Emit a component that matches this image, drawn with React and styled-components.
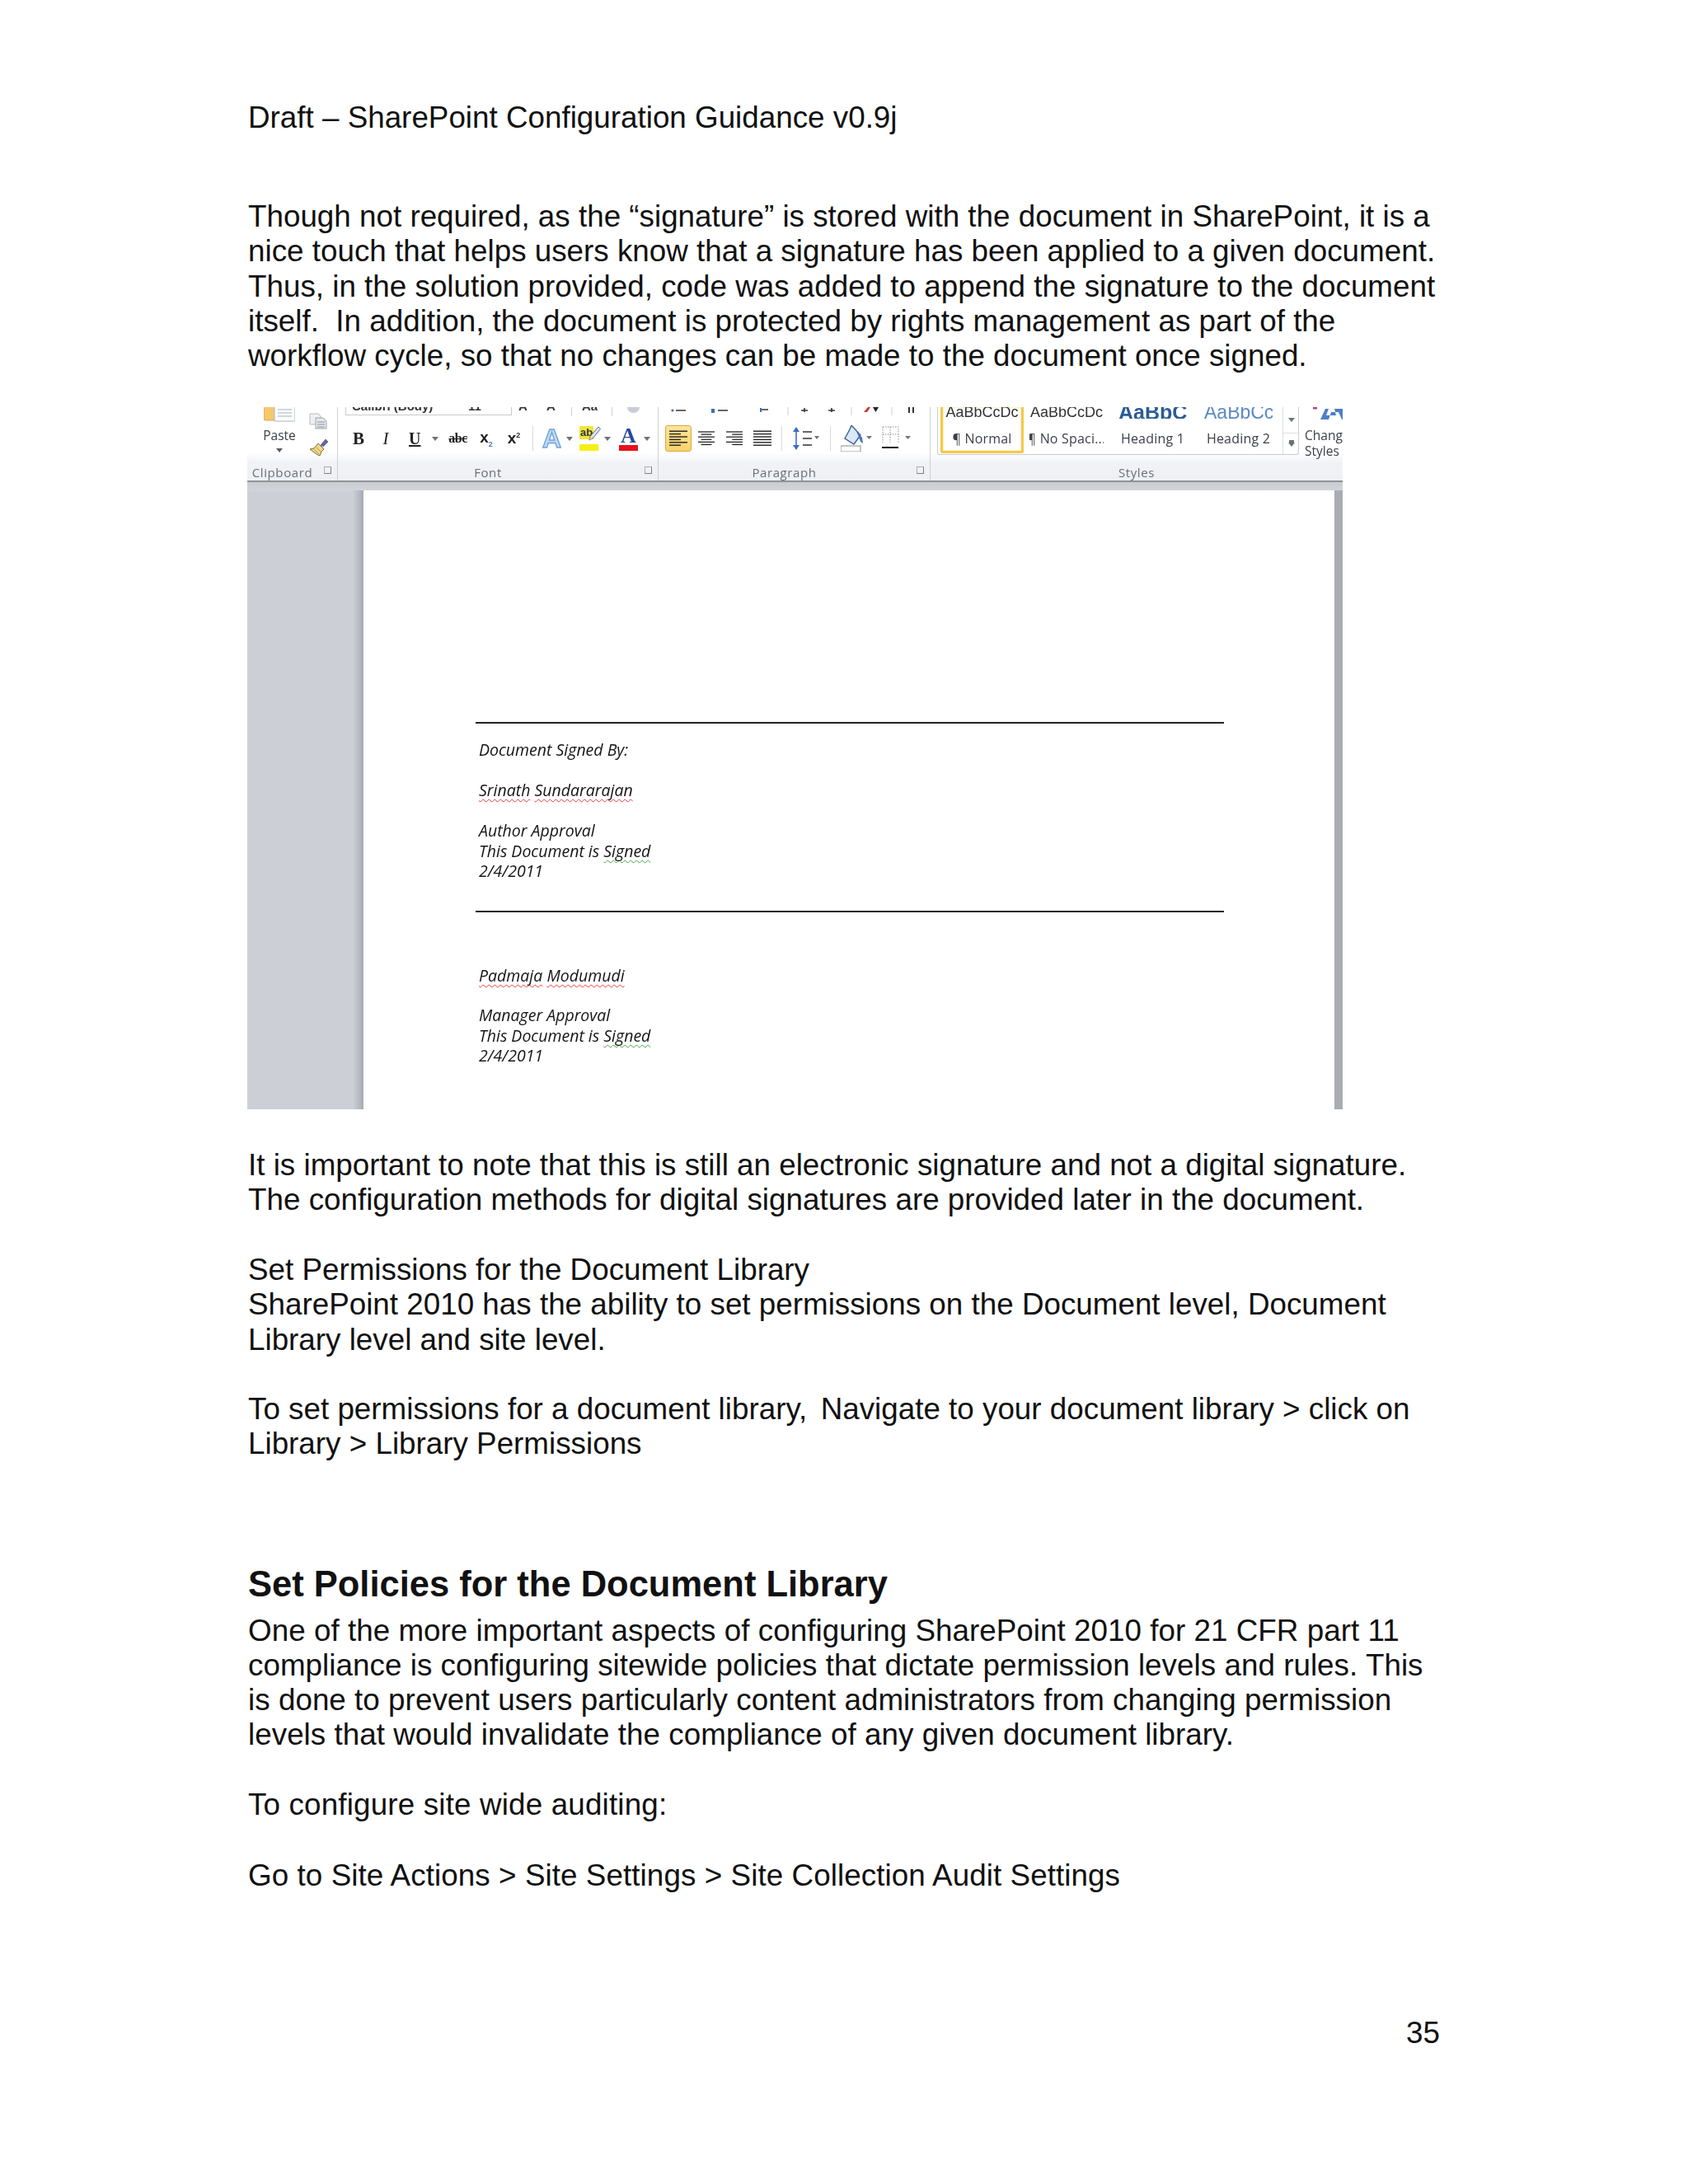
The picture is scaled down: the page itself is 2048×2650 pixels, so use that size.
import styled, { createGlobalStyle } from "styled-components"

const Global = createGlobalStyle`
  body {
    margin: 0;
    background: #fff;
    color: #111;
    font-family: "Liberation Sans", Arial, sans-serif;
  }
`

export default function App() {
  return (
    <Sheet>
      <Global />
      <Header>Draft – SharePoint Configuration Guidance v0.9j</Header>
      <Para $top={78}>
        Though not required, as the “signature” is stored with the document in SharePoint, it is a{"\n"}
        nice touch that helps users know that a signature has been applied to a given document.{"\n"}
        Thus, in the solution provided, code was added to append the signature to the document{"\n"}
        itself.  In addition, the document is protected by rights management as part of the{"\n"}
        workflow cycle, so that no changes can be made to the document once signed.
      </Para>

      <Shot>
        <Ribbon />
        <Workspace>
          <Sidebar />
          <SidebarShade />
          <DocPage>
            <SignBlock />
          </DocPage>
          <PageEdge />
        </Workspace>
      </Shot>

      <Para $top={47}>
        It is important to note that this is still an electronic signature and not a digital signature.{"\n"}
        The configuration methods for digital signatures are provided later in the document.
      </Para>
      <Para $top={42.5}>
        Set Permissions for the Document Library{"\n"}
        SharePoint 2010 has the ability to set permissions on the Document level, Document{"\n"}
        Library level and site level.
      </Para>
      <Para $top={42.5}>
        To set permissions for a document library,{" \u2006"}Navigate to your document library &gt; click on{"\n"}
        Library &gt; Library Permissions
      </Para>
      <Heading>Set Policies for the Document Library</Heading>
      <Para $ls={0.03}>
        One of the more important aspects of configuring SharePoint 2010 for 21 CFR part 11{"\n"}
        compliance is configuring sitewide policies that dictate permission levels and rules. This{"\n"}
        is done to prevent users particularly content administrators from changing permission{"\n"}
        levels that would invalidate the compliance of any given document library.
      </Para>
      <Para $top={43} $ls={0.16}>To configure site wide auditing:</Para>
      <Para $top={43} $ls={0.07}>Go to Site Actions &gt; Site Settings &gt; Site Collection Audit Settings</Para>
      <PageNumber>35</PageNumber>
    </Sheet>
  )
}

function Ribbon() {
  return (
    <RibbonBar>
      <Group $w={110} label="Clipboard" launcher>
        <ClipboardBody>
          <PasteCol>
            <PasteIcon />
            <SmallLabel>Paste</SmallLabel>
            <Caret $dark />
          </PasteCol>
          <SmallCol>
            <CopyIcon />
            <PainterIcon />
          </SmallCol>
        </ClipboardBody>
      </Group>

      <Group $w={389} label="Font" launcher>
        <ClipRow>
          <FontInput>
            <CutText $w={141}>Calibri (Body)</CutText>
            <CutText $w={60}>11</CutText>
          </FontInput>
          <CutText $ml={8} $w={34}>A</CutText>
          <CutText $w={30}>A</CutText>
          <ClipSep />
          <CutText $ml={12} $w={36}>Aa</CutText>
          <ClipSep />
          <EraserStub />
        </ClipRow>
        <ToolRow $pad={18}>
          <GlyphB $w={14}>B</GlyphB>
          <GlyphI $w={10} $ml={21}>I</GlyphI>
          <GlyphU $w={13} $ml={23}>U</GlyphU>
          <Caret $ml={15} />
          <GlyphStrike $w={23} $ml={12}>abc</GlyphStrike>
          <GlyphX $w={18} $ml={14}>x<sub>2</sub></GlyphX>
          <GlyphX $w={19} $ml={15}>x<sup>2</sup></GlyphX>
          <ToolSep $ml={13} />
          <GlowA $ml={11}>A</GlowA>
          <Caret $ml={6} />
          <Marker $ml={8}>
            <MarkerText>ab</MarkerText>
            <PencilIcon />
          </Marker>
          <Caret $ml={7} />
          <ColorA $ml={10}>A</ColorA>
          <Caret $ml={7} />
        </ToolRow>
      </Group>

      <Group $w={330} label="Paragraph" launcher>
        <ParagraphTop />
        <ToolRow $pad={8}>
          <AlignButton><AlignIcon kind="left" /></AlignButton>
          <AlignSlot $ml={8}><AlignIcon kind="center" /></AlignSlot>
          <AlignSlot $ml={14}><AlignIcon kind="right" /></AlignSlot>
          <AlignSlot $ml={12} $w={23}><AlignIcon kind="justify" /></AlignSlot>
          <ToolSep $ml={12} />
          <LineSpacingIcon />
          <ToolSep $ml={12} />
          <ShadingIcon />
          <BordersIcon />
        </ToolRow>
      </Group>

      <Group $w={500} label="Styles">
        <StylesBody>
          <Gallery>
            <StyleItem $w={101} $ml={3} $active>
              <Sample>AaBbCcDc</Sample>
              <StyleName>¶ Normal</StyleName>
            </StyleItem>
            <StyleItem $w={90} $ml={7}>
              <Sample>AaBbCcDc</Sample>
              <StyleName>¶ No Spaci...</StyleName>
            </StyleItem>
            <StyleItem $w={83} $ml={18}>
              <Sample $bold $color="#2b5c95" $size={25}>AaBbCc</Sample>
              <StyleName>Heading 1</StyleName>
            </StyleItem>
            <StyleItem $w={83} $ml={21}>
              <Sample $color="#5a8ac4" $size={23}>AaBbCc</Sample>
              <StyleName>Heading 2</StyleName>
            </StyleItem>
            <GalleryScroll>
              <ScrollBtn $h={31}><Caret /></ScrollBtn>
              <ScrollBtn $h={27}><MoreCaret /></ScrollBtn>
            </GalleryScroll>
          </Gallery>
          <ChangeCol>
            <ChangeIcon />
            <ChangeLabel>Chang{"\n"}Styles</ChangeLabel>
          </ChangeCol>
        </StylesBody>
      </Group>
    </RibbonBar>
  )
}

function Group({ $w, label, launcher, children }) {
  return (
    <GroupBox $w={$w}>
      <GroupBody>{children}</GroupBody>
      <GroupLabel $launcher={launcher}>
        <span>{label}</span>
        {launcher && <Launcher />}
      </GroupLabel>
    </GroupBox>
  )
}

function SignBlock() {
  return (
    <>
      <Rule />
      <SignLines $top={20}>
        <SignLine>Document Signed By:</SignLine>
        <SignLine $gap>
          <Spell>Srinath</Spell> <Spell>Sundararajan</Spell>
        </SignLine>
        <SignLine $gap>Author Approval</SignLine>
        <SignLine>This Document is <Spell $green>Signed</Spell></SignLine>
        <SignLine>2/4/2011</SignLine>
      </SignLines>
      <Rule $top={35} />
      <SignLines $top={65}>
        <SignLine>
          <Spell>Padmaja</Spell> <Spell>Modumudi</Spell>
        </SignLine>
        <SignLine $gap>Manager Approval</SignLine>
        <SignLine>This Document is <Spell $green>Signed</Spell></SignLine>
        <SignLine>2/4/2011</SignLine>
      </SignLines>
    </>
  )
}

// ribbon drawings
function PasteIcon() {
  return (
    <svg width="38" height="18" viewBox="0 0 38 18">
      <rect x="0" y="-8" width="20" height="24" rx="2" fill="#f6c86e" stroke="#d9a648" />
      <rect x="13" y="-6" width="25" height="23" fill="#fbfcfe" stroke="#aeb6c2" />
      <path d="M17 3h17M17 7h17M17 11h17" stroke="#c3cad4" strokeWidth="1.5" />
    </svg>
  )
}

function CopyIcon() {
  return (
    <svg width="22" height="20" viewBox="0 0 22 20">
      <path d="M1 1h10l3 3v10H1z" fill="#eef0f3" stroke="#b7bcc3" />
      <path d="M8 6h9l4 4v9H8z" fill="#e4e7eb" stroke="#9ea4ad" />
      <path d="M10 11h9M10 14h9M10 17h9" stroke="#8d939c" />
    </svg>
  )
}

function PainterIcon() {
  return (
    <svg width="24" height="22" viewBox="0 0 24 22">
      <path d="M14 8l6-7 3 3-6 6z" fill="#6a63a8" stroke="#4b4680" strokeWidth=".6" />
      <path d="M11 6l7 7-3 3-2 5-4-2-8-6 5-1z" fill="#f0d98a" stroke="#7a6a32" />
      <path d="M6 13l6 6M9 11l5 5" stroke="#b49a45" />
    </svg>
  )
}

function PencilIcon() {
  return (
    <Pencil width="15" height="20" viewBox="0 0 15 20">
      <path d="M12 1l2.5 2.5L5 15l-4 2 1-4.5z" fill="#dfe6f2" stroke="#56657e" />
      <path d="M1 17l1-4.5L5 15z" fill="#f1c24e" />
    </Pencil>
  )
}

function AlignIcon({ kind }) {
  const rows = [0, 1, 2, 3, 4, 5]
  return (
    <svg width="22" height="20" viewBox="0 0 22 20">
      {rows.map((i) => {
        const short = i % 2 === 1 && kind !== "justify"
        const w = short ? 14 : 22
        const x = kind === "center" ? (22 - w) / 2 : kind === "right" ? 22 - w : 0
        return <rect key={i} x={x} y={i * 3.4 + .5} width={w} height="1.4" fill="#222" />
      })}
    </svg>
  )
}

function LineSpacingIcon() {
  return (
    <LineSpacingBox>
      <svg width="34" height="28" viewBox="0 0 34 28">
        <path d="M5 0l4 6H1zM5 28l4-6H1z" fill="#3b6fc0" />
        <path d="M5 5v18" stroke="#3b6fc0" strokeWidth="1.6" />
        <path d="M13 6h11M13 14h11M13 22h11" stroke="#333" strokeWidth="1.6" />
        <path d="M27 11h6l-3 4z" fill="#6d7278" />
      </svg>
    </LineSpacingBox>
  )
}

function ShadingIcon() {
  return (
    <ShadingBox>
      <svg width="38" height="32" viewBox="0 0 38 32">
        <path d="M13 0l11 12-8 11-11-7 6-11z" fill="#dbe7f6" stroke="#3b5f94" strokeWidth="1.4" />
        <path d="M19 7l7 8 1 7-3-2z" fill="#4a77bd" />
        <rect x="0" y="25" width="24" height="7" fill="#fff" stroke="#8c8c8c" />
        <path d="M31 13h7l-3.5 4z" fill="#73787e" />
      </svg>
    </ShadingBox>
  )
}

function BordersIcon() {
  return (
    <BordersBox>
      <svg width="35" height="30" viewBox="0 0 35 30">
        <path d="M1 1h19v19M1 1v19M10 1v19M1 10h19" fill="none" stroke="#8a8f96" strokeWidth="1" strokeDasharray="1.5 1.5" />
        <path d="M0 26h20" stroke="#111" strokeWidth="2" />
        <path d="M28 12h7l-3.5 4z" fill="#73787e" />
      </svg>
    </BordersBox>
  )
}

function ParagraphTop() {
  return (
    <TopStrip width="330" height="11" viewBox="0 0 330 11">
      <circle cx="17" cy="4" r="1.6" fill="#3b6fc0" />
      <path d="M21 4h12M72 4h12M125 3h8M173 4h8M177 1v5M206 4h8M210 1v5" stroke="#333" strokeWidth="1.6" />
      <rect x="64" y="2" width="4" height="5" fill="#3b6fc0" />
      <rect x="123" y="1" width="2" height="5" fill="#3b6fc0" />
      <path d="M157 0v10M234 0v10M283 0v10" stroke="#ccd0d6" />
      <path d="M249 6l5-6h3l-4 6z" fill="#c0392b" />
      <path d="M260 0h7l-3.5 6z" fill="#222" />
      <path d="M304 0v7M309 0v7" stroke="#333" strokeWidth="2" />
    </TopStrip>
  )
}

function ChangeIcon() {
  return (
    <ChangeBox>
      <svg width="44" height="16" viewBox="0 0 44 16">
        <rect x="1" y="0" width="5" height="2.5" fill="#b0488a" />
        <path d="M10 15l6-13h4l-3 8h12l-2-8h15v13h-6l-4-9h-9l-3 9z" fill="#4c80c9" />
      </svg>
    </ChangeBox>
  )
}

// page
const Sheet = styled.div`
  box-sizing: border-box;
  width: 2048px;
  min-height: 2650px;
  padding: 122px 301px 0 301px;
`
const Header = styled.div`
  font-size: 36.8px;
  line-height: 42.2px;
  white-space: pre;
`
const Para = styled.p`
  margin: ${(p) => p.$top || 0}px 0 0;
  font-size: 36.8px;
  line-height: 42.2px;
  letter-spacing: ${(p) => p.$ls || 0}px;
  white-space: pre;
`
const Heading = styled.h2`
  margin: 123px 0 11px;
  font-size: 43.5px;
  line-height: 50px;
  font-weight: 700;
`
const PageNumber = styled.div`
  margin-top: 149px;
  text-align: right;
  font-size: 36.8px;
  line-height: 42.2px;
`

// pasted screenshot
const Shot = styled.div`
  width: 1329px;
  height: 852px;
  margin: 41px 0 0 -1px;
  display: flex;
  flex-direction: column;
  overflow: hidden;
  filter: blur(0.6px);
`
const RibbonBar = styled.div`
  flex: none;
  height: 89px;
  display: flex;
  background: linear-gradient(#fff 0, #fff 62%, #f0f2f6 76%, #eef0f4 100%);
  border-bottom: 2px solid #8f9398;
`
const GroupBox = styled.div`
  box-sizing: border-box;
  flex: none;
  width: ${(p) => p.$w}px;
  display: flex;
  flex-direction: column;
  border-right: 1px solid #cdd1d7;
  &:last-child { border-right: 0; }
`
const GroupBody = styled.div`
  flex: none;
  height: 69px;
  overflow: hidden;
`
const GroupLabel = styled.div`
  position: relative;
  flex: 1;
  display: flex;
  align-items: center;
  justify-content: center;
  padding: 0 ${(p) => (p.$launcher ? 24 : 0)}px 8px 0;
  font: 15px "Open Sans", sans-serif;
  letter-spacing: .6px;
  color: #6a7079;
`
const Launcher = styled.i`
  position: absolute;
  right: 7px;
  top: 3px;
  width: 7px;
  height: 7px;
  border: 1px solid #a9aeb5;
  border-right-color: #7b8088;
  border-bottom-color: #7b8088;
`
const ClipboardBody = styled.div`
  display: flex;
  padding-left: 20px;
`
const PasteCol = styled.div`
  width: 38px;
  display: flex;
  flex-direction: column;
  align-items: center;
`
const SmallLabel = styled.span`
  margin-top: 6px;
  font: 15.5px/20px "Open Sans", sans-serif;
  color: #3d4148;
`
const SmallCol = styled.div`
  margin: 7px 0 0 17px;
  display: flex;
  flex-direction: column;
  gap: 11px;
`
const Caret = styled.i`
  flex: none;
  width: 0;
  height: 0;
  margin-left: ${(p) => p.$ml || 0}px;
  margin-top: ${(p) => (p.$dark ? 6 : 0)}px;
  border-left: 4px solid transparent;
  border-right: 4px solid transparent;
  border-top: 5px solid ${(p) => (p.$dark ? "#5a5f66" : "#6d7278")};
`
const MoreCaret = styled(Caret)`
  box-shadow: 0 -4px 0 -1px #6d7278;
`
const ClipRow = styled.div`
  height: 11px;
  display: flex;
  padding-left: 9px;
  overflow: hidden;
`
const TopStrip = styled.svg`
  display: block;
`
const FontInput = styled.div`
  flex: none;
  width: 202px;
  height: 10px;
  display: flex;
  border: 1px solid #c6cad0;
  border-top: 0;
  padding-left: 7px;
  box-sizing: border-box;
`
const CutText = styled.span`
  flex: none;
  width: ${(p) => p.$w}px;
  margin-left: ${(p) => p.$ml || 0}px;
  margin-top: -5px;
  font: 700 15px/8px "Liberation Sans", sans-serif;
  color: #333;
`
const ClipSep = styled.i`
  flex: none;
  width: 1px;
  background: #ccd0d6;
`
const EraserStub = styled.i`
  flex: none;
  width: 15px;
  height: 7px;
  margin-left: 18px;
  border-radius: 0 0 8px 8px;
  background: #c9ced6;
`
const ToolRow = styled.div`
  height: 36px;
  margin-top: 9px;
  padding-left: ${(p) => p.$pad}px;
  display: flex;
  align-items: center;
`
const Glyph = styled.span`
  flex: none;
  width: ${(p) => p.$w}px;
  margin-left: ${(p) => p.$ml || 0}px;
  text-align: center;
  color: #222;
`
const GlyphB = styled(Glyph)`
  font: 700 21px "Liberation Serif", serif;
`
const GlyphI = styled(Glyph)`
  font: italic 21px "Liberation Serif", serif;
`
const GlyphU = styled(Glyph)`
  font: 700 20px "Liberation Serif", serif;
  text-decoration: underline;
`
const GlyphStrike = styled(Glyph)`
  font: 700 16px "Liberation Serif", serif;
  letter-spacing: -.5px;
  text-decoration: line-through;
`
const GlyphX = styled(Glyph)`
  font: 700 19px "Liberation Sans", sans-serif;
  white-space: nowrap;
  sub, sup {
    font-size: 9px;
    color: #4a77bd;
  }
  sup { color: #333; }
`
const ToolSep = styled.i`
  flex: none;
  width: 1px;
  height: 30px;
  margin-left: ${(p) => p.$ml || 0}px;
  background: #d6d9de;
`
const GlowA = styled.span`
  flex: none;
  width: 23px;
  margin-left: ${(p) => p.$ml}px;
  text-align: center;
  font: 700 32px/32px "Liberation Sans", sans-serif;
  color: #c4dbf4;
  -webkit-text-stroke: 1.4px #6ea3dc;
`
const Marker = styled.span`
  flex: none;
  width: 23px;
  height: 30px;
  margin-left: ${(p) => p.$ml}px;
  display: flex;
  background: linear-gradient(transparent 22px, #f5ef1a 22px);
`
const MarkerText = styled.span`
  flex: none;
  height: 16px;
  padding: 0 1px;
  font: 700 13px/15px "Liberation Sans", sans-serif;
  background: #efe63a;
  color: #333;
`
const Pencil = styled.svg`
  flex: none;
  margin-left: -6px;
`
const ColorA = styled.span`
  flex: none;
  width: 23px;
  height: 30px;
  margin-left: ${(p) => p.$ml}px;
  text-align: center;
  font: 700 26px/24px "Liberation Serif", serif;
  color: #27489a;
  background: linear-gradient(transparent 23px, #e8111b 23px);
`
const AlignButton = styled.span`
  flex: none;
  box-sizing: border-box;
  width: 32px;
  height: 32px;
  display: flex;
  align-items: center;
  justify-content: center;
  border: 1px solid #d8a849;
  border-radius: 3px;
  background: linear-gradient(#fde49a, #fad26a);
`
const AlignSlot = styled.span`
  flex: none;
  width: ${(p) => p.$w || 20}px;
  height: 20px;
  margin-left: ${(p) => p.$ml}px;
  display: flex;
  overflow: hidden;
  justify-content: center;
`
const LineSpacingBox = styled.span`
  flex: none;
  margin-left: 12px;
  height: 28px;
`
const ShadingBox = styled.span`
  flex: none;
  margin-left: 12px;
  height: 32px;
`
const BordersBox = styled.span`
  flex: none;
  margin-left: 12px;
  height: 30px;
`
const StylesBody = styled.div`
  display: flex;
  padding-left: 8px;
`
const Gallery = styled.div`
  flex: none;
  width: 439px;
  height: 58px;
  box-sizing: border-box;
  display: flex;
  border: 1px solid #c9cdd3;
  border-top: 0;
  border-radius: 0 0 3px 3px;
`
const StyleItem = styled.div`
  flex: none;
  box-sizing: border-box;
  width: ${(p) => p.$w}px;
  height: ${(p) => (p.$active ? 56 : 57)}px;
  margin-left: ${(p) => p.$ml}px;
  display: flex;
  flex-direction: column;
  align-items: center;
  overflow: hidden;
  ${(p) => p.$active && `
    border: 3px solid #f4c84b;
    border-top: 0;
    border-radius: 0 0 3px 3px;
    box-shadow: inset 0 0 0 1px #fff3c4;
  `}
`
const Sample = styled.span`
  width: 100%;
  height: 14px;
  overflow: hidden;
  text-align: center;
  white-space: nowrap;
  font: ${(p) => (p.$bold ? 700 : 400)} ${(p) => p.$size || 18}px/12px "Liberation Sans", sans-serif;
  color: ${(p) => p.$color || "#333"};
`
const StyleName = styled.span`
  margin-top: 14px;
  font: 16px/20px "Open Sans", sans-serif;
  letter-spacing: .2px;
  white-space: nowrap;
  color: #3d4148;
`
const GalleryScroll = styled.div`
  flex: none;
  width: 20px;
  margin-left: 12px;
  display: flex;
  flex-direction: column;
  border-left: 1px solid #dcdfe3;
`
const ScrollBtn = styled.div`
  flex: none;
  height: ${(p) => p.$h}px;
  display: flex;
  align-items: center;
  justify-content: center;
  border-bottom: 1px solid #dcdfe3;
  &:last-child { border-bottom: 0; }
`
const ChangeCol = styled.div`
  flex: 1;
  min-width: 0;
  margin-left: 7px;
  overflow: hidden;
`
const ChangeBox = styled.div`
  height: 16px;
  padding-left: 9px;
  margin-bottom: 9px;
`
const ChangeLabel = styled.div`
  font: 15.5px/19px "Open Sans", sans-serif;
  white-space: pre;
  color: #3d4148;
`
const Workspace = styled.div`
  flex: 1;
  min-height: 0;
  display: flex;
  padding-top: 10px;
  background: linear-gradient(#c9ccd1, #d3d5da 11px, #ccd0d6 12px);
`
const Sidebar = styled.div`
  flex: none;
  width: 128px;
`
const SidebarShade = styled.div`
  flex: none;
  width: 13px;
  background: linear-gradient(90deg, #ccd0d6, #a7aab2);
`
const DocPage = styled.div`
  flex: 1;
  box-sizing: border-box;
  padding: 281px 0 0 136px;
  background: #fff;
`
const PageEdge = styled.div`
  flex: none;
  width: 10px;
  background: #a9acb3;
`
const Rule = styled.div`
  width: 908px;
  height: 2px;
  margin-top: ${(p) => p.$top || 0}px;
  background: #222;
`
const SignLines = styled.div`
  margin-top: ${(p) => p.$top}px;
  padding-left: 4px;
`
const SignLine = styled.div`
  margin-top: ${(p) => (p.$gap ? 24.4 : 0)}px;
  font: italic 19.5px/24.5px "Open Sans", sans-serif;
  color: #151515;
  white-space: nowrap;
`
const Spell = styled.span`
  text-decoration: underline wavy ${(p) => (p.$green ? "#46a546" : "#e2383d")} 1px;
  text-decoration-skip-ink: none;
  text-underline-offset: 3px;
`
